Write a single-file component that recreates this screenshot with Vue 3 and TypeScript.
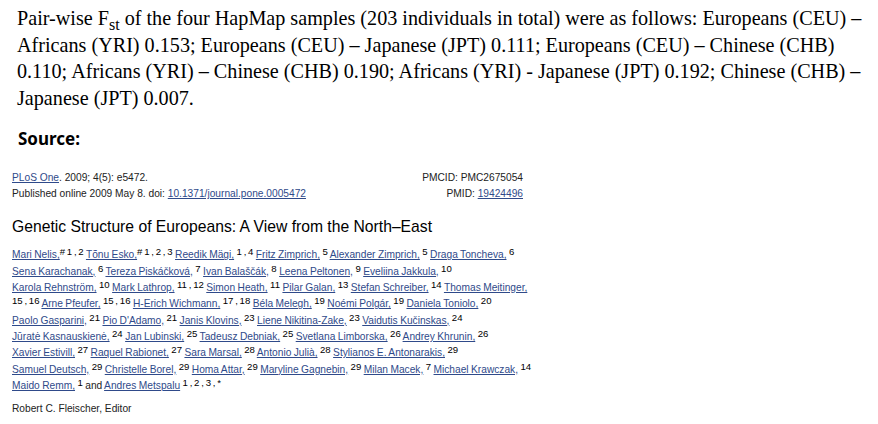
<script setup lang="ts">
type Part = { k: 'a' | 't' | 's'; v: string }
const a = (v: string): Part => ({ k: 'a', v })
const t = (v: string): Part => ({ k: 't', v })
const s = (v: string): Part => ({ k: 's', v })

const authorLines: Part[][] = [
  [a('Mari Nelis,'), s('# 1 , 2'), t(' '), a('Tõnu Esko,'), s('# 1 , 2 , 3'), t(' '), a('Reedik Mägi,'), t(' '), s('1 , 4'), t(' '), a('Fritz Zimprich,'), t(' '), s('5'), t(' '), a('Alexander Zimprich,'), t(' '), s('5'), t(' '), a('Draga Toncheva,'), t(' '), s('6')],
  [a('Sena Karachanak,'), t(' '), s('6'), t(' '), a('Tereza Piskáčková,'), t(' '), s('7'), t(' '), a('Ivan Balaščák,'), t(' '), s('8'), t(' '), a('Leena Peltonen,'), t(' '), s('9'), t(' '), a('Eveliina Jakkula,'), t(' '), s('10')],
  [a('Karola Rehnström,'), t(' '), s('10'), t(' '), a('Mark Lathrop,'), t(' '), s('11 , 12'), t(' '), a('Simon Heath,'), t(' '), s('11'), t(' '), a('Pilar Galan,'), t(' '), s('13'), t(' '), a('Stefan Schreiber,'), t(' '), s('14'), t(' '), a('Thomas Meitinger,')],
  [s('15 , 16'), t(' '), a('Arne Pfeufer,'), t(' '), s('15 , 16'), t(' '), a('H-Erich Wichmann,'), t(' '), s('17 , 18'), t(' '), a('Béla Melegh,'), t(' '), s('19'), t(' '), a('Noémi Polgár,'), t(' '), s('19'), t(' '), a('Daniela Toniolo,'), t(' '), s('20')],
  [a('Paolo Gasparini,'), t(' '), s('21'), t(' '), a("Pio D'Adamo,"), t(' '), s('21'), t(' '), a('Janis Klovins,'), t(' '), s('23'), t(' '), a('Liene Nikitina-Zake,'), t(' '), s('23'), t(' '), a('Vaidutis Kučinskas,'), t(' '), s('24')],
  [a('Jūratė Kasnauskienė,'), t(' '), s('24'), t(' '), a('Jan Lubinski,'), t(' '), s('25'), t(' '), a('Tadeusz Debniak,'), t(' '), s('25'), t(' '), a('Svetlana Limborska,'), t(' '), s('26'), t(' '), a('Andrey Khrunin,'), t(' '), s('26')],
  [a('Xavier Estivill,'), t(' '), s('27'), t(' '), a('Raquel Rabionet,'), t(' '), s('27'), t(' '), a('Sara Marsal,'), t(' '), s('28'), t(' '), a('Antonio Julià,'), t(' '), s('28'), t(' '), a('Stylianos E. Antonarakis,'), t(' '), s('29')],
  [a('Samuel Deutsch,'), t(' '), s('29'), t(' '), a('Christelle Borel,'), t(' '), s('29'), t(' '), a('Homa Attar,'), t(' '), s('29'), t(' '), a('Maryline Gagnebin,'), t(' '), s('29'), t(' '), a('Milan Macek,'), t(' '), s('7'), t(' '), a('Michael Krawczak,'), t(' '), s('14')],
  [a('Maido Remm,'), t(' '), s('1'), t(' and '), a('Andres Metspalu'), t(' '), s('1 , 2 , 3 , *')],
]
</script>

<template>
  <main class="page">
    <p class="intro">
      Pair-wise F<sub>st</sub> of the four HapMap samples (203 individuals in total) were as follows: Europeans (CEU) –
      Africans (YRI) 0.153; Europeans (CEU) – Japanese (JPT) 0.111; Europeans (CEU) – Chinese (CHB)
      0.110; Africans (YRI) – Chinese (CHB) 0.190; Africans (YRI) - Japanese (JPT) 0.192; Chinese (CHB) –
      Japanese (JPT) 0.007.
    </p>
    <h2 class="source">Source:</h2>
    <section class="article">
      <div class="meta">
        <div>
          <div><a>PLoS One</a>. 2009; 4(5): e5472.</div>
          <div>Published online 2009 May 8. doi: <a>10.1371/journal.pone.0005472</a></div>
        </div>
        <div class="ids">
          <div>PMCID: PMC2675054</div>
          <div>PMID: <a>19424496</a></div>
        </div>
      </div>
      <h1 class="title">Genetic Structure of Europeans: A View from the North–East</h1>
      <div class="authors">
        <div v-for="(line, i) in authorLines" :key="i" class="line">
          <template v-for="(p, j) in line" :key="j">
            <a v-if="p.k === 'a'">{{ p.v }}</a>
            <sup v-else-if="p.k === 's'">{{ p.v }}</sup>
            <template v-else>{{ p.v }}</template>
          </template>
        </div>
      </div>
      <div class="editor">Robert C. Fleischer, Editor</div>
    </section>
  </main>
</template>

<style scoped>
.page {
  width: 878px;
  height: 424px;
  overflow: hidden;
  box-sizing: border-box;
  padding-top: 5px;
  background: #fff;
  color: #000;
}
.intro {
  margin: 0 0 0 17px;
  width: 860px;
  font: 20.17px/26.7px "Liberation Serif", serif;
}
.intro sub {
  font-size: 16px;
  line-height: 0;
}
.source {
  margin: 15px 0 0 18px;
  font: 700 17px/24px "Noto Sans", sans-serif;
}
.article {
  width: 511px;
  margin: 19px 0 0 12px;
  font: 10.2px/16.2px "Liberation Sans", sans-serif;
  color: #222;
}
a {
  color: #2f4a8a;
  text-decoration: underline;
}
.meta {
  display: flex;
  justify-content: space-between;
}
.ids {
  text-align: right;
}
.title {
  margin: 15px 0 0;
  font: 400 15.7px/20px "Liberation Sans", sans-serif;
  color: #000;
}
.authors {
  margin-top: 10px;
}
.line {
  white-space: pre;
  height: 16.35px;
  word-spacing: -0.4px;
}
sup {
  font-size: 9.6px;
  line-height: 0;
  vertical-align: 3.5px;
  color: #000;
  word-spacing: -0.9px;
}
.editor {
  margin-top: 7px;
}
</style>
